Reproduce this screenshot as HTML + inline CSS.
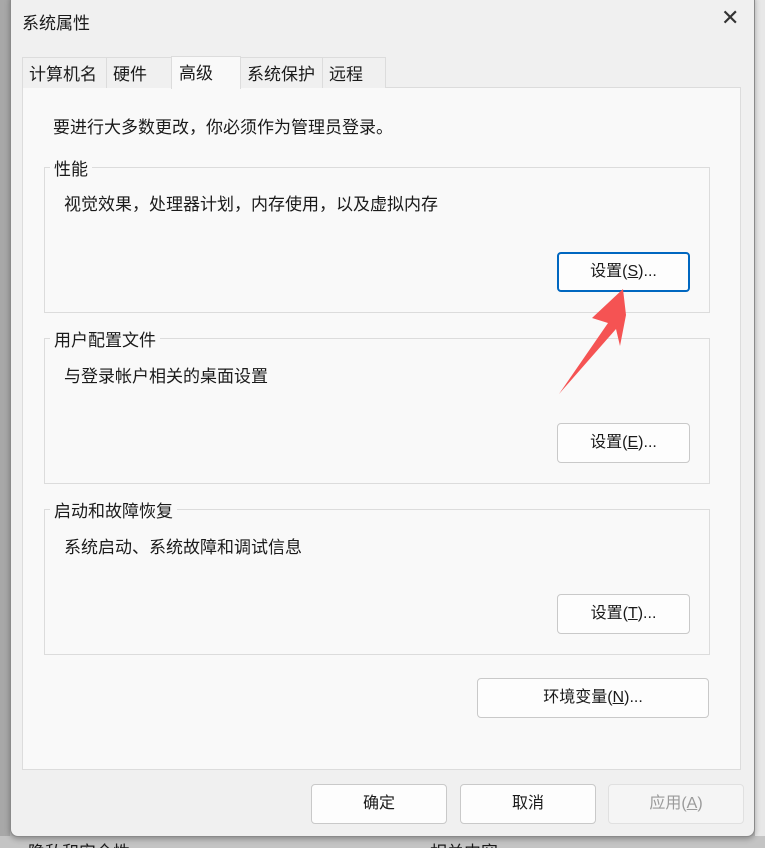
<!DOCTYPE html>
<html style="width:765px;height:848px;overflow:hidden"><head><meta charset="utf-8"><style>
*{margin:0;padding:0;box-sizing:border-box}
body{width:765px;height:848px;background:#bdbdbd;position:relative;overflow:hidden;font-family:"Liberation Sans","Noto Sans CJK SC",sans-serif;font-size:17px;color:#1a1a1a}
.a{position:absolute}
.win{left:10px;top:-8px;width:745px;height:845px;background:#f0f0f0;border:1px solid #8a8a8a;border-radius:8px;box-shadow:0 2px 6px rgba(0,0,0,.3)}
.panel{left:22px;top:87px;width:719px;height:683px;background:#f9f9f9;border:1px solid #dcdcdc}
.tab{top:57px;height:31px;border:1px solid #dcdcdc;border-bottom:none;background:#f0f0f0;padding:2px 0 0 6px;font-size:17px}
.grp{border:1px solid #dcdcdc;left:44px;width:666px}
.btn{background:#fdfdfd;border:1px solid #c9c9c9;border-radius:4px;text-align:center;font-size:16px}
</style></head><body>
<div class="a" style="left:755px;top:0;width:10px;height:848px;background:#e8e8e8"></div>
<div class="a" style="left:0;top:0;width:10px;height:848px;background:#a8a8a8"></div>
<div class="a" style="left:0;top:836px;width:765px;height:12px;background:#c4c4c4;overflow:hidden"><div class="a" style="left:28px;top:2px">隐私和安全性</div><div class="a" style="left:430px;top:2px">相关内容</div></div>
<div class="a win"></div>
<div class="a" style="left:22px;top:9px;font-size:17px">系统属性</div>
<div class="a" style="left:721px;top:5px;font-size:22px;font-weight:300;color:#333">✕</div>
<div class="a panel"></div>
<div class="a tab" style="left:22px;width:85px">计算机名</div>
<div class="a tab" style="left:106px;width:66px">硬件</div>
<div class="a tab" style="left:171px;top:56px;height:33px;width:70px;background:#f9f9f9;padding-left:7px">高级</div>
<div class="a tab" style="left:240px;width:83px">系统保护</div>
<div class="a tab" style="left:322px;width:64px">远程</div>
<div class="a" style="left:53px;top:113px">要进行大多数更改，你必须作为管理员登录。</div>
<div class="a grp" style="top:167px;height:146px"></div>
<div class="a" style="left:50px;top:155px;background:#f9f9f9;padding:0 4px">性能</div>
<div class="a" style="left:64px;top:190px">视觉效果，处理器计划，内存使用，以及虚拟内存</div>
<div class="a btn" style="left:557px;top:252px;width:133px;height:40px;border:2px solid #0067c0;line-height:36px">设置(<u>S</u>)...</div>
<div class="a grp" style="top:338px;height:146px"></div>
<div class="a" style="left:50px;top:326px;background:#f9f9f9;padding:0 4px">用户配置文件</div>
<div class="a" style="left:64px;top:362px">与登录帐户相关的桌面设置</div>
<div class="a btn" style="left:557px;top:423px;width:133px;height:40px;line-height:38px">设置(<u>E</u>)...</div>
<div class="a grp" style="top:509px;height:146px"></div>
<div class="a" style="left:50px;top:497px;background:#f9f9f9;padding:0 4px">启动和故障恢复</div>
<div class="a" style="left:64px;top:533px">系统启动、系统故障和调试信息</div>
<div class="a btn" style="left:557px;top:594px;width:133px;height:40px;line-height:38px">设置(<u>T</u>)...</div>
<div class="a btn" style="left:477px;top:678px;width:232px;height:40px;line-height:38px">环境变量(<u>N</u>)...</div>
<div class="a btn" style="left:311px;top:784px;width:136px;height:40px;line-height:38px">确定</div>
<div class="a btn" style="left:460px;top:784px;width:136px;height:40px;line-height:38px">取消</div>
<div class="a btn" style="left:608px;top:784px;width:136px;height:40px;line-height:38px;background:#f5f5f5;border-color:#e0e0e0;color:#9a9a9a">应用(<u>A</u>)</div>
<svg class="a" style="left:555px;top:285px" width="75" height="115"><polygon points="68,4 71,30 65,61 61,44 4,109 53,38 37,33" fill="#f55353"/></svg>
</body></html>
